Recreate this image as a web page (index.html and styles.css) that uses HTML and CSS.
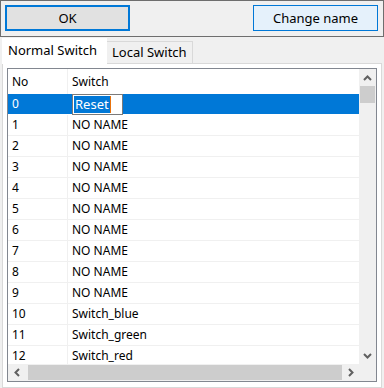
FILE: index.html
```html
<!doctype html>
<html>
<head>
<meta charset="utf-8">
<link rel="stylesheet" href="styles.css">
</head>
<body>
<div class="toolbar">
    <button class="btn btn-default">OK</button>
    <button class="btn btn-hover">Change name</button>
</div>
<div class="tabs">
    <div class="tab active">Normal Switch</div>
    <div class="tab">Local Switch</div>
</div>
<div class="tab-page">
    <div class="list">
        <div class="view">
            <div class="grid">
                <div class="row head"><div class="c-no">No</div><div class="c-name">Switch</div></div>
                <div class="row selected"><div class="c-no">0</div><div class="c-name"><span class="edit"><span class="sel">Reset</span><span class="caret"></span></span></div></div>
                <div class="row"><div class="c-no">1</div><div class="c-name">NO NAME</div></div>
                <div class="row"><div class="c-no">2</div><div class="c-name">NO NAME</div></div>
                <div class="row"><div class="c-no">3</div><div class="c-name">NO NAME</div></div>
                <div class="row"><div class="c-no">4</div><div class="c-name">NO NAME</div></div>
                <div class="row"><div class="c-no">5</div><div class="c-name">NO NAME</div></div>
                <div class="row"><div class="c-no">6</div><div class="c-name">NO NAME</div></div>
                <div class="row"><div class="c-no">7</div><div class="c-name">NO NAME</div></div>
                <div class="row"><div class="c-no">8</div><div class="c-name">NO NAME</div></div>
                <div class="row"><div class="c-no">9</div><div class="c-name">NO NAME</div></div>
                <div class="row"><div class="c-no">10</div><div class="c-name">Switch_blue</div></div>
                <div class="row"><div class="c-no">11</div><div class="c-name">Switch_green</div></div>
                <div class="row"><div class="c-no">12</div><div class="c-name">Switch_red</div></div>
            </div>
        </div>
        <div class="vscroll">
            <div class="arrow"><svg width="9" height="6" viewBox="0 0 9 6"><path d="M1 5 L4.5 1.5 L8 5" fill="none" stroke="#606060" stroke-width="2"/></svg></div>
            <div class="thumb"></div>
            <div class="track"></div>
            <div class="arrow"><svg width="9" height="6" viewBox="0 0 9 6"><path d="M1 1 L4.5 4.5 L8 1" fill="none" stroke="#606060" stroke-width="2"/></svg></div>
        </div>
        <div class="hscroll">
            <div class="arrow"><svg width="6" height="9" viewBox="0 0 6 9"><path d="M5 1 L1.5 4.5 L5 8" fill="none" stroke="#606060" stroke-width="2"/></svg></div>
            <div class="thumb"></div>
            <div class="arrow"><svg width="6" height="9" viewBox="0 0 6 9"><path d="M1 1 L4.5 4.5 L1 8" fill="none" stroke="#606060" stroke-width="2"/></svg></div>
        </div>
        <div class="corner"></div>
    </div>
</div>
</body>
</html>
```

FILE: styles.css
```css
* { box-sizing: border-box; }
html, body { margin: 0; }
body {
    width: 384px;
    height: 388px;
    background: #f0f0f0;
    font-family: "Noto Sans", sans-serif;
    font-size: 12px;
    color: #000;
    overflow: hidden;
}

.toolbar {
    height: 37px;
    border: 1px solid #6e6e6e;
    padding: 4px 5px 4px 4px;
    display: flex;
    justify-content: space-between;
    background: #f0f0f0;
}
.btn {
    width: 125px;
    height: 26px;
    font: inherit;
    font-size: 13px;
    color: #000;
    padding: 0;
}
.btn-default { background: #e1e1e1; border: 2px solid #0078d7; }
.btn-hover { background: #e5f1fb; border: 1px solid #0078d7; }

.tabs {
    display: flex;
    align-items: flex-end;
    height: 26px;
    padding-left: 2px;
}
.tab {
    height: 22px;
    padding: 0 5px;
    border: 1px solid #d9d9d9;
    border-bottom: none;
    background: #f0f0f0;
    font-size: 13px;
    line-height: 21px;
}
.tab.active {
    height: 26px;
    background: #fff;
    border-color: #fff;
    line-height: 22px;
    width: 105px;
    margin-bottom: -1px;
    position: relative;
}
.tab + .tab { border-left: none; }

.tab-page {
    margin: 0 2px 0 2px;
    height: 325px;
    background: #fff;
    border: 1px solid #d9d9d9;
    padding: 4px 4px 5px 4px;
}

.list {
    height: 314px;
    border: 1px solid #828790;
    display: grid;
    grid-template-columns: 1fr 17px;
    grid-template-rows: 1fr 17px;
}
.view { overflow: hidden; background: #fff; }

.row {
    display: flex;
    height: 21px;
    border-bottom: 1px solid #f0f0f0;
    line-height: 20px;
}
.row.head { height: 25px; border-bottom: none; line-height: 25px; }
.c-no {
    width: 60px;
    padding-left: 4px;
    border-right: 1px solid #f0f0f0;
}
.c-name { flex: 1; padding-left: 4px; }
.row.selected { background: #0078d7; color: #fff; border-bottom-color: #fff; }
.row.selected .c-no { border-right-color: #0078d7; }

.edit {
    display: inline-flex;
    align-items: center;
    width: 51px;
    height: 21px;
    background: #fff;
    border: 1px solid #7a7a7a;
    padding-left: 1px;
    vertical-align: top;
}
.sel {
    background: #0078d7;
    color: #fff;
    line-height: 17px;
    padding: 0 1px;
    font-size: 13px;
}
.caret { width: 1px; height: 17px; background: #e8730d; }

.vscroll, .hscroll { background: #f0f0f0; display: flex; }
.vscroll { flex-direction: column; }
.arrow {
    width: 17px;
    height: 17px;
    display: flex;
    align-items: center;
    justify-content: center;
    flex: none;
}
.vscroll .thumb { height: 17px; margin: 0 1px; background: #cdcdcd; }
.vscroll .track { flex: 1; }
.hscroll .thumb { flex: 1; margin: 1px 0 1px 3px; background: #cdcdcd; }
.corner { background: #f0f0f0; }
```
